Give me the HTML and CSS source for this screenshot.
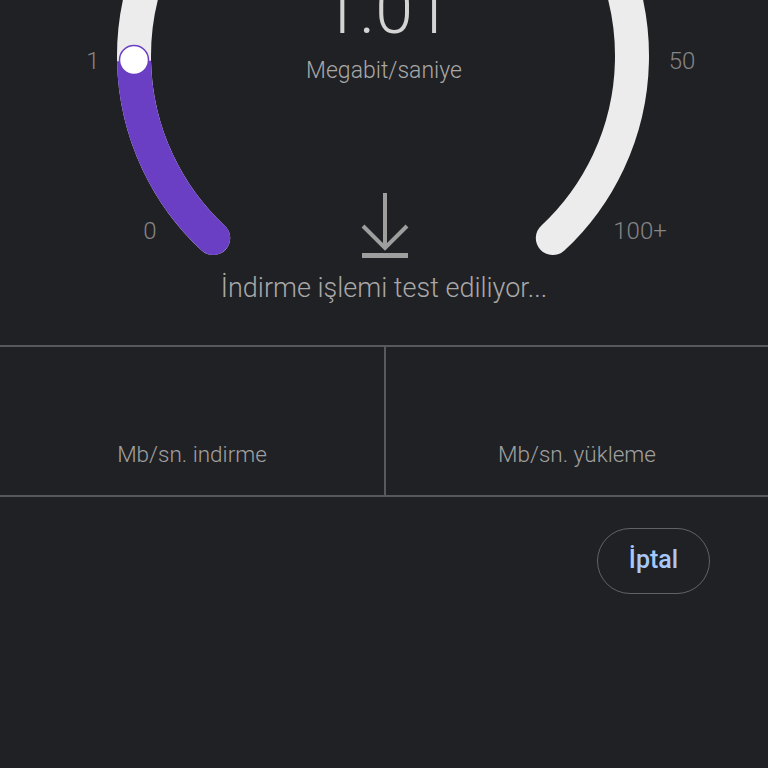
FILE: index.html
```html
<!DOCTYPE html>
<html lang="tr">
<head>
<meta charset="utf-8">
<link rel="stylesheet" href="styles.css">
</head>
<body>
<main class="app">
  <section class="gauge">
    <svg class="dial" width="768" height="346" viewBox="0 0 768 346" xmlns="http://www.w3.org/2000/svg">
      <path d="M213.2 238.1 A249 249 0 1 1 552.8 238.1" fill="none" stroke="#ececec" stroke-width="34" stroke-linecap="round"/>
      <path d="M213.2 238.1 A249 249 0 0 1 134 61" fill="none" stroke="#6a3fc4" stroke-width="34" stroke-linecap="butt"/>
      <circle cx="213.2" cy="238.1" r="17" fill="#6a3fc4"/>
      <circle cx="134" cy="60" r="14.5" fill="#ffffff" stroke="#6a3fc4" stroke-width="1.5"/>
      <g stroke="#9e9e9e" fill="none" stroke-width="4">
        <line x1="385" y1="193" x2="385" y2="247"/>
        <polyline points="363,226 385,248 407,226"/>
      </g>
      <rect x="362" y="253" width="46" height="5" fill="#9e9e9e"/>
    </svg>
    <div class="value">1.01</div>
    <div class="unit">Megabit/saniye</div>
    <span class="tick t0">0</span>
    <span class="tick t1">1</span>
    <span class="tick t50">50</span>
    <span class="tick t100">100+</span>
    <div class="status">İndirme işlemi test ediliyor...</div>
  </section>
  <section class="stats">
    <div class="stat">Mb/sn. indirme</div>
    <div class="stat">Mb/sn. yükleme</div>
  </section>
  <div class="actions">
    <button class="cancel">İptal</button>
  </div>
</main>
</body>
</html>
```
FILE: styles.css
```css
html, body {
  margin: 0;
  padding: 0;
  background: #202124;
  width: 768px;
  height: 768px;
  overflow: hidden;
}
.app {
  font-family: Roboto, "Liberation Sans", sans-serif;
  color: #a0a0a0;
}
.gauge {
  position: relative;
  height: 345px;
}
.dial {
  position: absolute;
  left: 0;
  top: 0;
}
.value {
  position: absolute;
  left: 0;
  right: 0;
  top: -24px;
  text-align: center;
  font-size: 68px;
  font-weight: 300;
  color: #d4d4d4;
  line-height: 1;
  padding-left: 4px;
}
.unit {
  position: absolute;
  left: 0;
  right: 0;
  top: 56px;
  text-align: center;
  font-size: 23px;
  font-weight: 300;
  color: #a8a8a8;
  line-height: 30px;
}
.tick {
  position: absolute;
  font-size: 24px;
  font-weight: 300;
  color: #858585;
  line-height: 30px;
  transform: translateX(-50%);
}
.t0 { left: 150px; top: 216px; }
.t1 { left: 93px; top: 46px; }
.t50 { left: 682px; top: 46px; }
.t100 { left: 640px; top: 216px; }
.status {
  position: absolute;
  left: 0;
  right: 0;
  top: 271px;
  text-align: center;
  font-size: 27px;
  font-weight: 300;
  color: #a8a8a8;
  line-height: 34px;
}
.stats {
  display: grid;
  grid-template-columns: 1fr 1fr;
  height: 148px;
  border-top: 2px solid #58595c;
  border-bottom: 2px solid #58595c;
}
.stat {
  display: flex;
  align-items: flex-end;
  justify-content: center;
  padding-bottom: 28px;
  font-size: 22.5px;
  font-weight: 300;
  color: #a0a0a0;
}
.stat + .stat {
  border-left: 2px solid #58595c;
}
.actions {
  display: flex;
  justify-content: flex-end;
  padding: 31px 58px 0 0;
}
.cancel {
  width: 113px;
  height: 66px;
  border: 1.5px solid #5f6368;
  border-radius: 33px;
  background: transparent;
  color: #a8c7fa;
  font-family: Roboto, "Open Sans", sans-serif;
  font-size: 25px;
  font-weight: 500;
  padding: 0 0 4px 0;
}
```
